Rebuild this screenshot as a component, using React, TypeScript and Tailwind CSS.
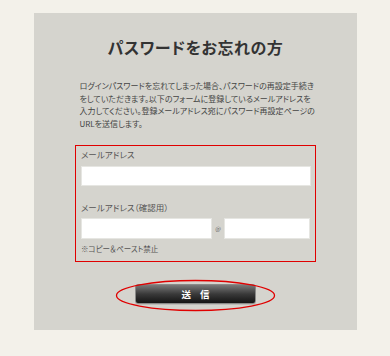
import React from "react";

export default function App() {
  const jp = {
    fontFamily: '"MS PGothic","Noto Sans CJK JP",sans-serif',
    fontFeatureSettings: '"palt"',
  } as React.CSSProperties;
  return (
    <div className="w-[390px] h-[356px] bg-[#f3f1ea] pt-[13px] pl-[34px]" style={jp}>
      <div className="w-[323px] h-[317px] bg-[#d5d4ce] flex flex-col items-center text-[#333]">
        <h1 className="mt-[24px] text-[16px] leading-[20px] font-bold text-[#333] tracking-[0.5px]">
          パスワードをお忘れの方
        </h1>
        <p className="mt-[23px] w-[232px] text-[8px] leading-[12.5px] text-[#444] whitespace-nowrap">
          ログインパスワードを忘れてしまった場合、パスワードの再設定手続き<br />
          をしていただきます。以下のフォームに登録しているメールアドレスを<br />
          入力してください。登録メールアドレス宛にパスワード再設定ページの<br />
          URLを送信します。
        </p>
        <div className="mt-[15px] w-[241px] h-[117px] border border-[#e00000] px-[5px] pt-[2px]">
          <div className="text-[8.5px] leading-[12px] text-[#555]">メールアドレス</div>
          <div className="mt-[6px] h-[20px] w-[230px] bg-white border border-[#e6e6e2]"></div>
          <div className="mt-[15px] text-[8.5px] leading-[12px] text-[#555]">メールアドレス（確認用）</div>
          <div className="mt-[5px] flex items-center">
            <div className="h-[21px] w-[131px] bg-white border border-[#e6e6e2]"></div>
            <span className="w-[12px] text-center text-[6px] text-[#666]">@</span>
            <div className="h-[21px] w-[86px] bg-white border border-[#e6e6e2]"></div>
          </div>
          <div className="mt-[5px] text-[7.5px] leading-[10px] text-[#555]">※コピー＆ペースト禁止</div>
        </div>
        <div className="relative mt-[22px] w-[121px] h-[20px]">
          <div className="w-full h-full rounded-[3px] border border-[#8a8a88] bg-gradient-to-b from-[#7a7a7a] via-[#3a3a3a] to-[#151515] flex items-center justify-center shadow-[0_1px_0_#bdbdb8]">
            <span className="text-white text-[9.5px] font-bold tracking-[9px] pl-[9px]">送信</span>
          </div>
          <svg className="absolute left-[-20px] top-[-5px]" width="161" height="33" viewBox="0 0 161 33">
            <ellipse cx="80.5" cy="16.5" rx="79" ry="15" fill="none" stroke="#e00000" strokeWidth="1.3" />
          </svg>
        </div>
      </div>
    </div>
  );
}
